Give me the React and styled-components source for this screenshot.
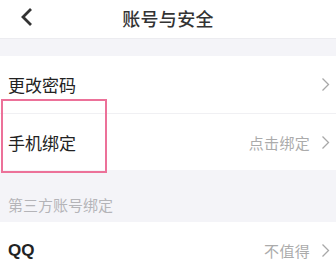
import React from "react";
import styled, { createGlobalStyle } from "styled-components";

const GlobalStyle = createGlobalStyle`
	html, body {
		margin: 0;
		padding: 0;
		background: #f4f4f8;
		font-family: "Noto Sans CJK SC", "Noto Sans", sans-serif;
	}
`;

// Styled components.
const Page = styled.div`
	position: relative;
	width: 336px;
	height: 272px;
	overflow: hidden;
	background: #f4f4f8;
`;

const Header = styled.header`
	position: relative;
	display: flex;
	align-items: center;
	justify-content: center;
	height: 39px;
	background: #fff;
	border-bottom: 1px solid #ececf0;
	box-sizing: border-box;
`;

const BackButton = styled.div`
	position: absolute;
	left: 19px;
	top: 7px;
	width: 16px;
	height: 20px;
	display: flex;
	align-items: center;
	justify-content: center;
`;

const Title = styled.h1`
	margin: 0 0 2px 0;
	font-size: 18px;
	font-weight: 500;
	color: #333;
	letter-spacing: 0.3px;
`;

const Spacer = styled.div`
	height: ${ ( props ) => props.size }px;
`;

const Group = styled.div`
	background: #fff;
`;

const Row = styled.div`
	display: flex;
	align-items: center;
	justify-content: space-between;
	height: 57px;
	padding: 0 6px 0 8px;
	box-sizing: border-box;
	border-top: ${ ( props ) => props.divided ? "1px solid #f0f0f3" : "none" };
`;

const Label = styled.span`
	font-size: 17px;
	color: #222;
	font-weight: ${ ( props ) => props.bold ? 600 : 400 };
	font-family: ${ ( props ) => props.bold ? "\"Liberation Sans\", Arial, sans-serif" : "inherit" };
`;

const Extra = styled.div`
	display: flex;
	align-items: center;
	gap: 11px;
`;

const Value = styled.span`
	font-size: 15px;
	color: #ababab;
	letter-spacing: 0.3px;
`;

const SectionTitle = styled.div`
	display: flex;
	align-items: flex-end;
	height: 52px;
	padding: 0 0 7px 8px;
	box-sizing: border-box;
	font-size: 15px;
	color: #b4b4b8;
`;

const Highlight = styled.div`
	position: absolute;
	left: 1px;
	top: 99px;
	width: 106px;
	height: 74px;
	border: 2.5px solid #ec7199;
	box-sizing: border-box;
	pointer-events: none;
`;

const Chevron = () => (
	<svg width="9" height="15" viewBox="0 0 9 15">
		<path d="M1.5 1.5 L7.5 7.5 L1.5 13.5" fill="none" stroke="#a8a8a8" strokeWidth="1.3" />
	</svg>
);

const BackIcon = () => (
	<svg width="14" height="20" viewBox="0 0 14 20">
		<path d="M11 2 L3 10 L11 18" fill="none" stroke="#333" strokeWidth="2.8" />
	</svg>
);

const settings = [
	{ label: "更改密码" },
	{ label: "手机绑定", value: "点击绑定" },
];

export default function App() {
	return (
		<Page>
			<GlobalStyle />
			<Header>
				<BackButton><BackIcon /></BackButton>
				<Title>账号与安全</Title>
			</Header>
			<Spacer size={ 17 } />
			<Group>
				{ settings.map( ( item, i ) => (
					<Row key={ item.label } divided={ i > 0 }>
						<Label>{ item.label }</Label>
						<Extra>
							{ item.value && <Value>{ item.value }</Value> }
							<Chevron />
						</Extra>
					</Row>
				) ) }
			</Group>
			<SectionTitle>第三方账号绑定</SectionTitle>
			<Group>
				<Row>
					<Label bold>QQ</Label>
					<Extra>
						<Value>不值得</Value>
						<Chevron />
					</Extra>
				</Row>
			</Group>
			<Highlight />
		</Page>
	);
}
